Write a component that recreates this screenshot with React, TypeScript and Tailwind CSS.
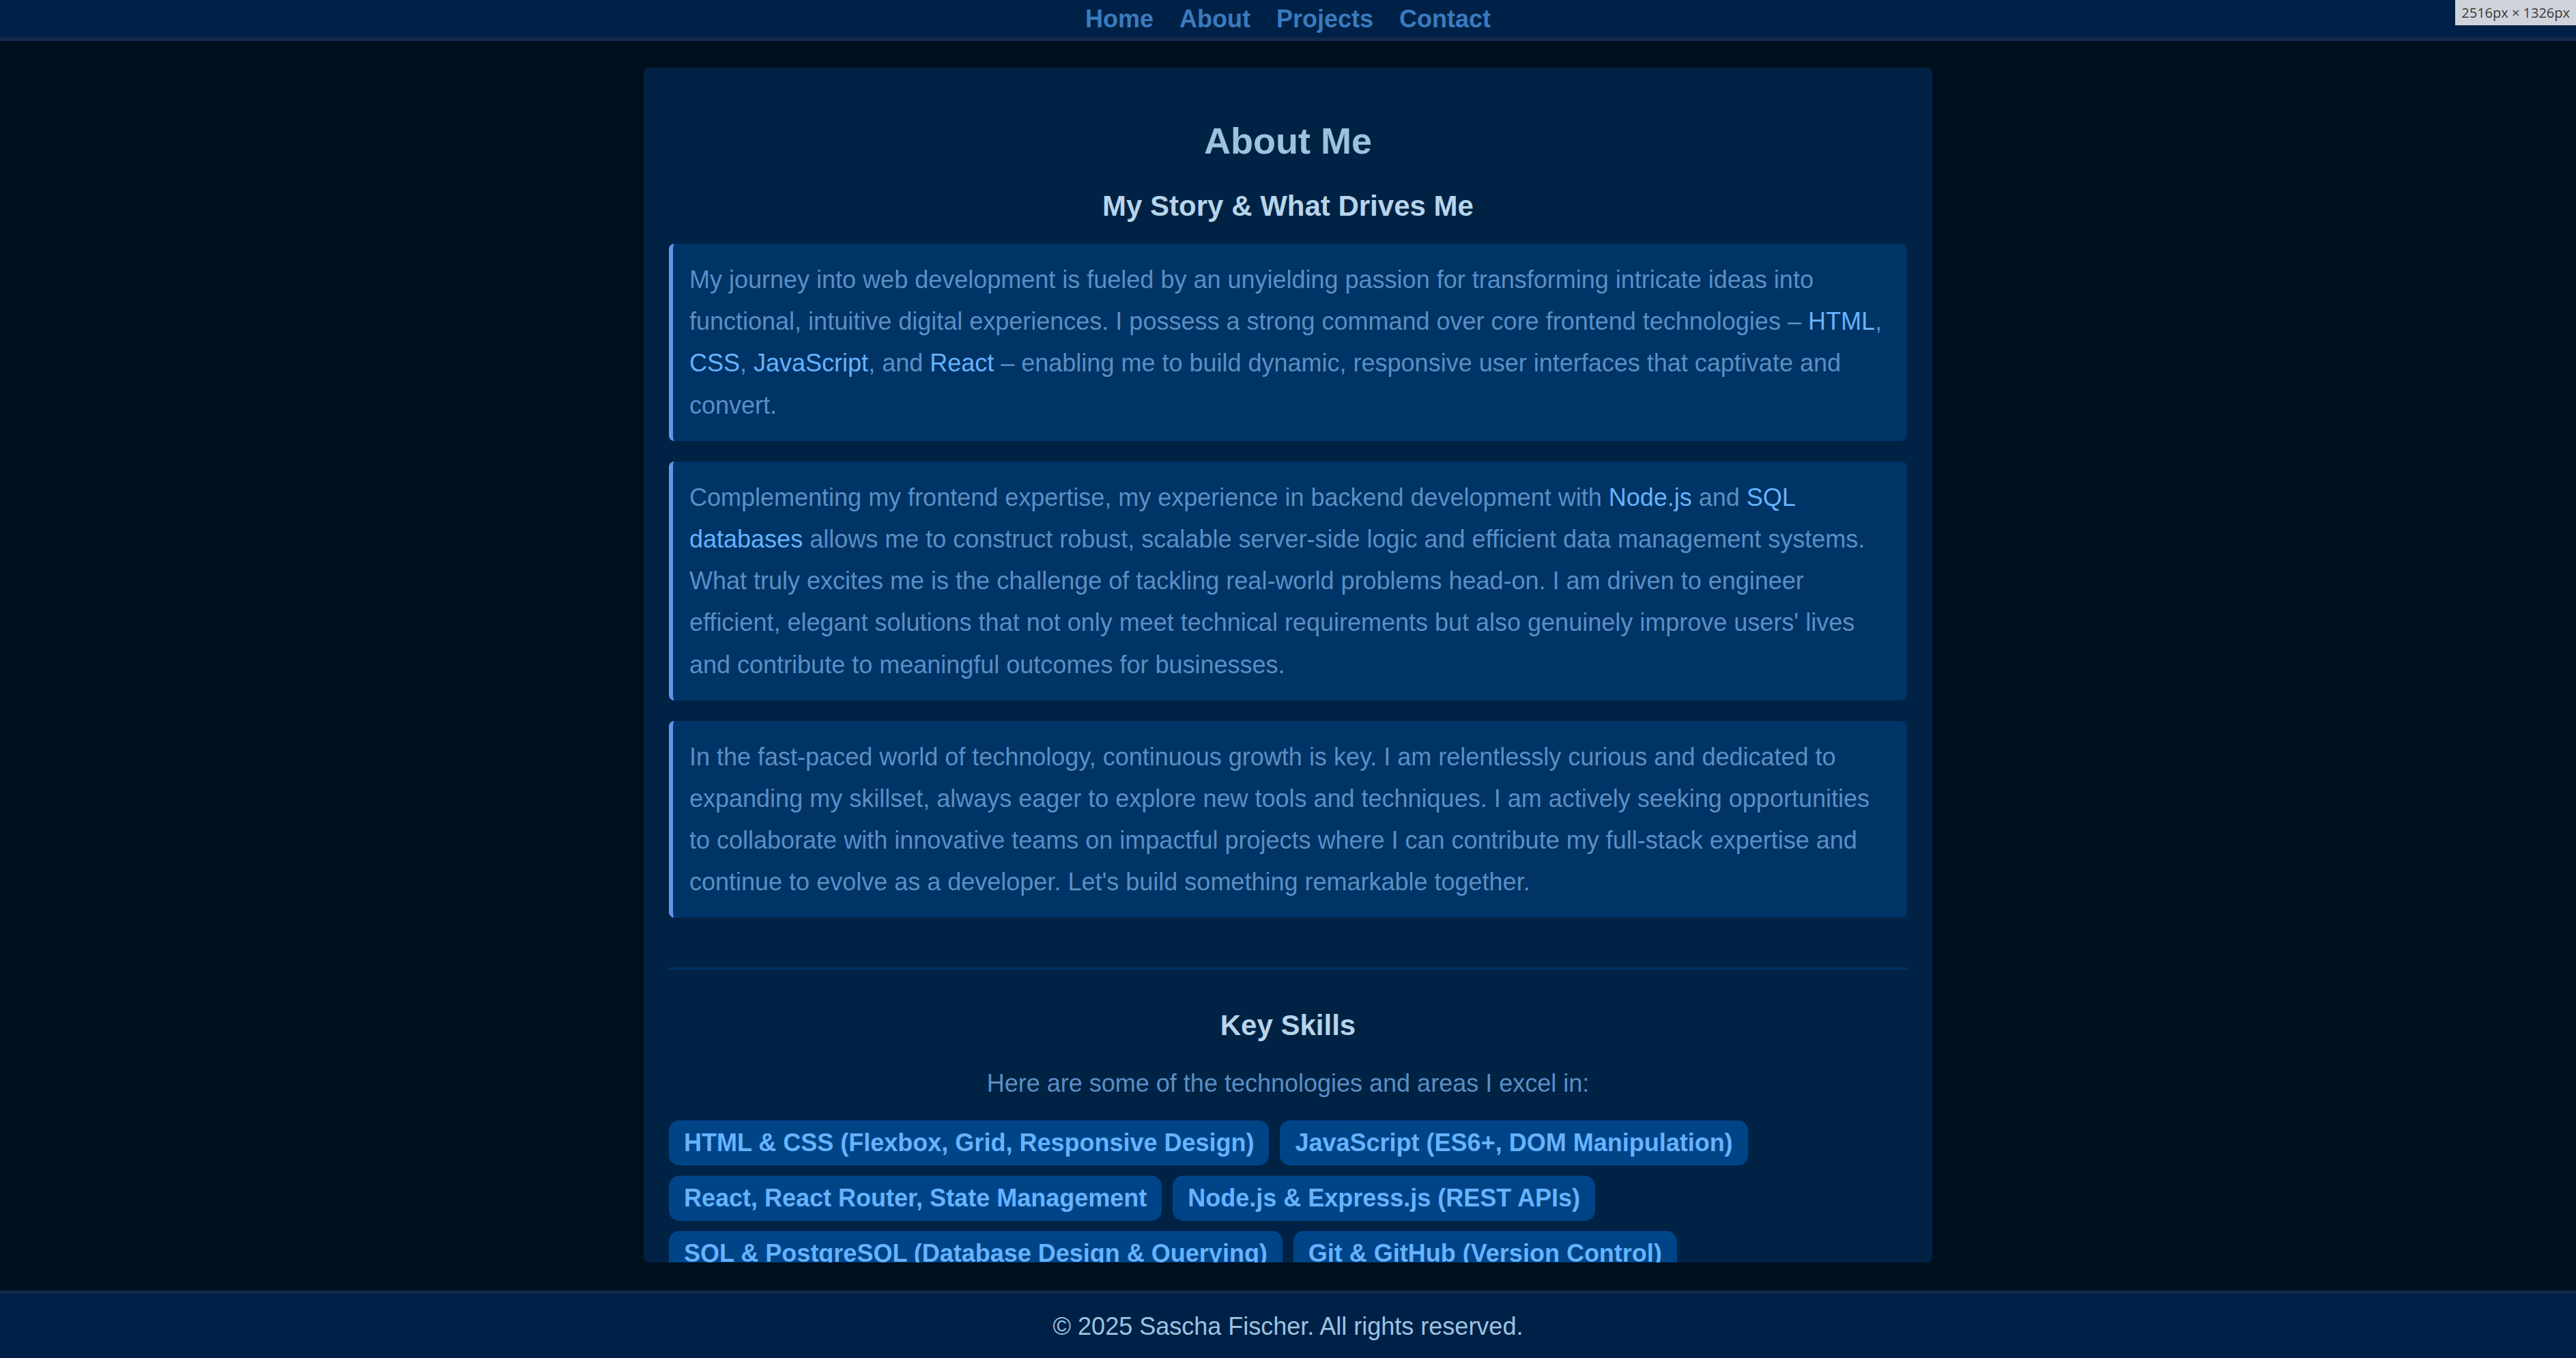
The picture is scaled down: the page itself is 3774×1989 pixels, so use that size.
import React from "react";

const Hl = ({ children }: { children: React.ReactNode }) => (
  <span className="text-[#66b3ff]">{children}</span>
);

const skills = [
  "HTML & CSS (Flexbox, Grid, Responsive Design)",
  "JavaScript (ES6+, DOM Manipulation)",
  "React, React Router, State Management",
  "Node.js & Express.js (REST APIs)",
  "SQL & PostgreSQL (Database Design & Querying)",
  "Git & GitHub (Version Control)",
  "Problem Solving & Debugging",
  "Agile Collaboration",
];

export default function App() {
  return (
    <div className="relative flex h-screen flex-col overflow-hidden bg-[#00101f] font-['Liberation_Sans',Arial,sans-serif]">
      <nav className="flex h-[60px] shrink-0 items-start justify-center border-b-[5px] border-[#15294d] bg-[#002147]">
        <ul className="flex gap-[38px] pt-[7px]">
          {["Home", "About", "Projects", "Contact"].map((l) => (
            <li key={l}>
              <a className="text-[36px] font-bold leading-[41px] text-[#3a7bbf]">{l}</a>
            </li>
          ))}
        </ul>
      </nav>

      <main className="flex min-h-0 flex-1 justify-center pt-[39px] pb-[41px]">
        <section className="w-[1888px] overflow-hidden rounded-[8px] bg-[#002244] px-[37px] pt-[76px]">
          <h1 className="text-center text-[54px] font-bold leading-[62px] text-[#9bc2de]">About Me</h1>
          <h2 className="mt-[41px] text-center text-[42px] font-bold leading-[48px] text-[#b8d4ea]">
            My Story &amp; What Drives Me
          </h2>

          <div className="mt-[31px] flex flex-col gap-[30px]">
            <p className="rounded-[8px] border-l-[6px] border-[#6495ed] bg-[#003366] px-[24px] py-[22px] text-[36px] leading-[1.7] text-[#5a8fc5]">
              My journey into web development is fueled by an unyielding passion for transforming intricate ideas into
              functional, intuitive digital experiences. I possess a strong command over core frontend technologies –{" "}
              <Hl>HTML</Hl>, <Hl>CSS</Hl>, <Hl>JavaScript</Hl>, and <Hl>React</Hl> – enabling me to build dynamic,
              responsive user interfaces that captivate and convert.
            </p>
            <p className="rounded-[8px] border-l-[6px] border-[#6495ed] bg-[#003366] px-[24px] py-[22px] text-[36px] leading-[1.7] text-[#5a8fc5]">
              Complementing my frontend expertise, my experience in backend development with <Hl>Node.js</Hl> and{" "}
              <Hl>SQL databases</Hl> allows me to construct robust, scalable server-side logic and efficient data
              management systems. What truly excites me is the challenge of tackling real-world problems head-on. I am
              driven to engineer efficient, elegant solutions that not only meet technical requirements but also
              genuinely improve users' lives and contribute to meaningful outcomes for businesses.
            </p>
            <p className="rounded-[8px] border-l-[6px] border-[#6495ed] bg-[#003366] px-[24px] py-[22px] text-[36px] leading-[1.7] text-[#5a8fc5]">
              In the fast-paced world of technology, continuous growth is key. I am relentlessly curious and dedicated to
              expanding my skillset, always eager to explore new tools and techniques. I am actively seeking
              opportunities to collaborate with innovative teams on impactful projects where I can contribute my
              full-stack expertise and continue to evolve as a developer. Let's build something remarkable together.
            </p>
          </div>

          <div className="mt-[73px] h-[3px] bg-[#003366]" />

          <h2 className="mt-[58px] text-center text-[42px] font-bold leading-[48px] text-[#b8d4ea]">Key Skills</h2>
          <p className="mt-[30px] text-center text-[36px] leading-[61px] text-[#5a8fc5]">
            Here are some of the technologies and areas I excel in:
          </p>

          <ul className="mt-[24px] flex flex-wrap gap-x-[16px] gap-y-[15px]">
            {skills.map((s) => (
              <li
                key={s}
                className="rounded-[15px] bg-[#004488] px-[22px] py-[12px] text-[36px] font-bold leading-[42px] text-[#66b3ff]"
              >
                {s}
              </li>
            ))}
          </ul>
        </section>
      </main>

      <footer className="flex h-[99px] shrink-0 items-center justify-center border-t-[5px] border-[#15294d] bg-[#002147]">
        <p className="text-[36px] leading-[41px] text-[#9bc4e2]">© 2025 Sascha Fischer. All rights reserved.</p>
      </footer>

      <div className="absolute right-0 top-0 bg-[#cfd4dc] px-[9px] py-[5px] font-['Open_Sans',sans-serif] text-[20px] leading-[27px] text-[#3a3a3a]">
        2516px × 1326px
      </div>
    </div>
  );
}
